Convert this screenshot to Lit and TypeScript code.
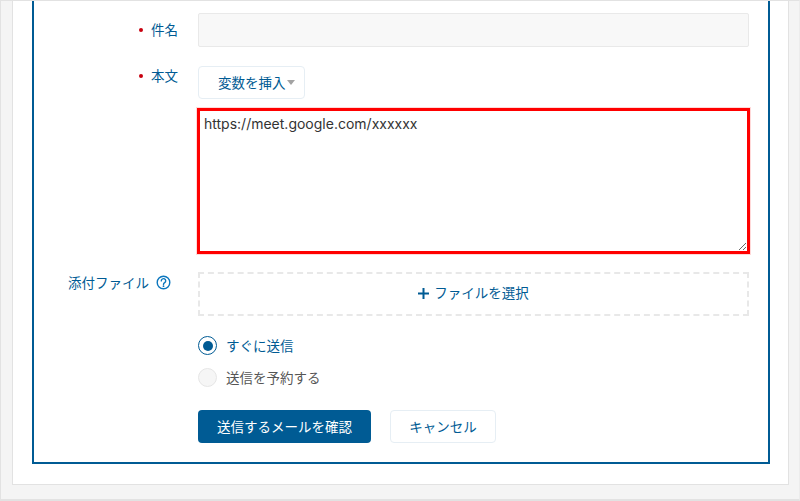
import { LitElement, html, css } from "lit";
import { customElement } from "lit/decorators.js";

@customElement("app-root")
export class AppRoot extends LitElement {
  static styles = css`
    :host { display: block; width: 800px; height: 501px; overflow: hidden; box-sizing: border-box;
      font-family: "Noto Sans CJK JP", "Open Sans", sans-serif; font-size: 13.5px; color: #005b94; }
    * { box-sizing: border-box; }
    .outer { width: 800px; height: 501px; background: #f4f4f4; border: 1px solid #e2e2e2; border-right-color: #ececec; border-bottom-width: 2px; padding: 0 10px 14px 11px; display: flex; }
    .panel { flex: 1; min-width: 0; background: #fff; border: 1px solid #e2e2e2; border-top: 0; padding: 0 18px 20px 19px; display: flex; }
    .box { flex: 1; min-width: 0; border: 2px solid #005b94; border-top: 0; padding: 12px 19px 0 0; display: flex; flex-direction: column; }
    .row { display: grid; grid-template-columns: 164px minmax(0, 1fr); }
    .label { display: flex; justify-content: flex-end; align-items: flex-start; line-height: 18px; padding-right: 20px; white-space: nowrap; }
    .label.center { align-items: center; padding-bottom: 3px; }
    .label.attach { padding-right: 27px; line-height: 20px; }
    .req { width: 4px; height: 4px; margin: 8px 8px 0 0; border-radius: 50%; background: #c8000f; }
    .label.center .req { margin-top: 2px; }
    .input { height: 34px; background: #f8f8f8; border: 1px solid #e9e9e9; border-radius: 2px; }
    .var { width: 107px; height: 33px; border: 1px solid #e6eef4; border-radius: 4px; background: #fff; display: flex; align-items: center; padding: 0 0 2px 19px; gap: 1px; }
    .caret { width: 0; height: 0; margin-top: 2px; border: 4.5px solid transparent; border-top: 5px solid #a3a3a3; border-bottom: 0; }
    textarea { display: block; width: 553px; height: 146px; margin: 9px -2px 0 -1px; border: 3px solid #f00; box-shadow: 0 0 0 1px #ffd9d9; outline: none; padding: 3px 4px; font: 14px/20px "Inter", sans-serif; color: #333; background: #fff; resize: both; border-radius: 0; }
    .drop { height: 44px; border: 2px dashed #e8e8e8; display: flex; align-items: center; justify-content: center; gap: 5px; padding-bottom: 4px; }
    .plus { display: block; margin-top: 2px; }
    .help { margin-left: 7px; margin-top: 3px; display: block; }
    .radio { display: flex; align-items: center; gap: 9px; height: 19px; line-height: 19px; margin-left: 164px; }
    .dot { width: 19px; height: 19px; border-radius: 50%; border: 1px solid #e6e6e6; background: #f6f6f6; flex: none; }
    .dot.on { background: #fff; border: 1.5px solid #005b94; display: flex; align-items: center; justify-content: center; }
    .dot.on::before { content: ""; width: 10px; height: 10px; border-radius: 50%; background: #005b94; }
    .off { color: #555; }
    .actions { display: flex; gap: 19px; margin: 23px 0 0 164px; }
    .btn { height: 33px; border-radius: 4px; display: flex; align-items: center; justify-content: center; padding-bottom: 2px; }
    .primary { width: 173px; background: #005b94; color: #fff; }
    .secondary { width: 106px; background: #fff; border: 1px solid #e6eef4; }
    .r1 { margin-top: 19px; }
    .r2 { margin-top: 18px; }
    .m1 { margin-top: 20px; }
    .m2 { margin-top: 13px; }
  `;

  render() {
    return html`
      <div class="outer"><div class="panel"><div class="box">
        <div class="row">
          <div class="label center"><span class="req"></span>件名</div><div class="input"></div>
        </div>
        <div class="row r1">
          <div class="label"><span class="req"></span>本文</div>
          <div>
            <div class="var">変数を挿入<span class="caret"></span></div>
            <textarea spellcheck="false">https://meet.google.com/xxxxxx</textarea>
          </div>
        </div>
        <div class="row r2">
          <div class="label attach">添付ファイル
            <svg class="help" width="15" height="15" viewBox="0 0 15 15" fill="none" stroke="#0b76bd" stroke-width="1.4">
              <circle cx="7.5" cy="7.5" r="6.3"/>
              <path d="M5.3 5.9a2.2 2.2 0 1 1 3.4 1.8c-.8.5-1.2.9-1.2 1.8" stroke-linecap="round"/>
              <circle cx="7.5" cy="11.2" r=".9" fill="#0b76bd" stroke="none"/>
            </svg>
          </div>
          <div class="drop">
            <svg class="plus" width="11" height="11" viewBox="0 0 11 11"><path d="M5.5 0v11M0 5.5h11" stroke="#005b94" stroke-width="2"/></svg>
            ファイルを選択
          </div>
        </div>
        <div class="radio m1"><span class="dot on"></span>すぐに送信</div>
        <div class="radio off m2"><span class="dot"></span>送信を予約する</div>
        <div class="actions">
          <div class="btn primary">送信するメールを確認</div>
          <div class="btn secondary">キャンセル</div>
        </div>
      </div></div></div>
    `;
  }
}
